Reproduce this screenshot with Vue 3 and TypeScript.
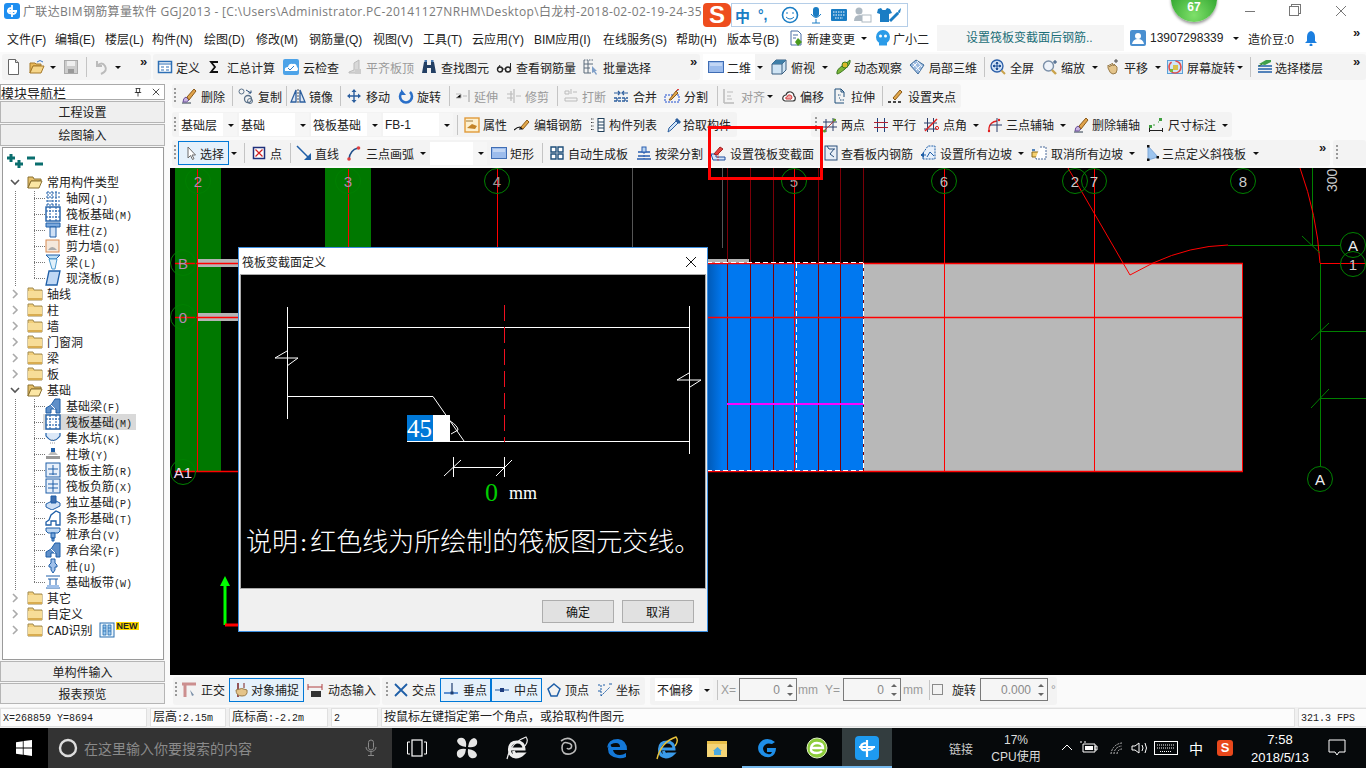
<template>
  <div class="app">
    <div class="title">
      <svg class="title-logo" viewBox="0 0 16 16" v-html="icons.app"></svg>
      <span class="title-text">广联达BIM钢筋算量软件 GGJ2013 - [C:\Users\Administrator.PC-20141127NRHM\Desktop\白龙村-2018-02-02-19-24-35</span>
      <div class="win-btns">
        <span class="win-min"></span>
        <span class="win-max"></span>
        <svg class="win-close" viewBox="0 0 10 10"><path d="M0 0l10 10M10 0L0 10" stroke="#777" fill="none" /></svg>
      </div>
    </div>

    <div v-for="bar in bars" :key="bar.cls" class="bar" :class="bar.cls">
      <div v-for="(g, gi) in bar.groups" :key="gi" class="group" :class="{ plain: g.plain }" :style="{ marginLeft: g.ml + 'px', width: g.w + 'px' }">
        <span class="lead" :style="{ width: g.lead + 'px' }"></span>
        <template v-for="(it, ii) in g.items" :key="ii">
          <div v-if="it.kind === 'tool'" class="tool" :class="{ off: it.off, active: it.active, white: it.white }" :style="{ width: it.w + 'px' }">
            <svg v-if="it.i" class="ic" viewBox="0 0 16 16" :style="{ marginLeft: it.iml + 'px' }" v-html="icons[it.i]"></svg>
            <span class="lbl" :style="{ marginLeft: it.lml + 'px' }">{{ it.l }}</span>
          </div>
          <span v-else-if="it.kind === 'dd'" class="dd" :style="{ width: it.w + 'px' }"></span>
          <span v-else-if="it.kind === 'sep'" class="sep" :style="{ width: it.w + 'px' }"></span>
          <span v-else-if="it.kind === 'grip'" class="grip" :style="{ width: it.w + 'px' }"></span>
          <span v-else-if="it.kind === 'more'" class="more" :style="{ width: it.w + 'px' }">»</span>
          <span v-else-if="it.kind === 'gap'" :style="{ width: it.w + 'px' }"></span>
          <div v-else-if="it.kind === 'combo'" class="combo" :style="{ width: it.bw + 'px', marginRight: it.w - it.bw + 'px' }">
            <span>{{ it.l }}</span><span class="dd combo-dd"></span>
          </div>
          <div v-else-if="it.kind === 'note'" class="note" :style="{ width: it.bw + 'px', marginRight: it.w - it.bw + 'px' }">{{ it.l }}</div>
          <div v-else-if="it.kind === 'spin'" class="spin" :style="{ width: it.bw + 'px', marginRight: it.w - it.bw + 'px' }">
            <span class="spin-val">{{ it.l }}</span>
            <span class="spin-arrows"><i class="up"></i><i class="down"></i></span>
          </div>
          <span v-else-if="it.kind === 'check'" class="check-wrap" :style="{ width: it.w + 'px' }"><span class="check"></span></span>
        </template>
      </div>
    </div>

    <aside class="nav">
      <div class="nav-head">
        <span>模块导航栏</span>
        <span class="nav-head-btns">
          <svg viewBox="0 0 10 12" width="8" height="11"><path d="M2 1h6M3 1v5h4V1M1 6h8M5 6v5" stroke="#222" fill="none" /></svg>
          <svg viewBox="0 0 10 10" width="8" height="8"><path d="M1 1l8 8M9 1l-8 8" stroke="#222" fill="none" /></svg>
        </span>
      </div>
      <div class="nav-btn">工程设置</div>
      <div class="nav-btn">绘图输入</div>
      <div class="tree">
        <div class="tree-tools">
          <svg viewBox="0 0 18 16" width="18" height="16"><path d="M1 5h8M5 1v8M9 11h8M13 7v8" stroke="#0a6e6e" stroke-width="3" fill="none" /></svg>
          <svg viewBox="0 0 18 16" width="18" height="16"><path d="M1 5h8M9 11h8" stroke="#0a6e6e" stroke-width="3" fill="none" /></svg>
        </div>
        <div v-for="(n, idx) in tree" :key="idx" class="row" :class="[n.child ? 'child' : 'parent', { sel: n.sel, last: n.last }]">
          <template v-if="n.child">
            <svg class="ic tree-ic" viewBox="0 0 16 16" v-html="icons[n.i!]"></svg>
            <span class="tree-txt">{{ n.l }}<em>{{ n.k }}</em></span>
          </template>
          <template v-else>
            <svg class="chev" viewBox="0 0 10 10"><path :d="n.open ? 'M1 3l4 4 4-4' : 'M3 1l4 4-4 4'" :stroke="n.open ? '#555' : '#aaa'" stroke-width="1.6" fill="none" /></svg>
            <svg class="ic folder" viewBox="0 0 16 16" v-html="n.open ? icons.fopen : icons.fclosed"></svg>
            <span class="tree-txt">{{ n.l }}</span>
            <template v-if="n.cad">
              <svg class="ic cad" viewBox="0 0 16 16" v-html="icons.cad"></svg>
              <span class="new">NEW</span>
            </template>
          </template>
        </div>
      </div>
      <div class="nav-btn foot">单构件输入</div>
      <div class="nav-btn foot">报表预览</div>
    </aside>

    <main class="canvas">
      <svg class="cad-view" viewBox="170 168 1196 507" width="1196" height="507">
        <defs>
          <linearGradient id="blueFade" x1="0" x2="1" y1="0" y2="0">
            <stop offset="0" stop-color="#0058b4" />
            <stop offset="0.1" stop-color="#0078f0" />
          </linearGradient>
        </defs>
        <g shape-rendering="crispEdges">
          <rect x="175" y="168" width="46" height="304" fill="#007800" />
          <rect x="325" y="168" width="46" height="304" fill="#007800" />
          <rect x="198" y="259" width="540" height="8" fill="#b4b4b4" />
          <rect x="198" y="313" width="540" height="8" fill="#b4b4b4" />
          <rect x="707" y="259" width="42" height="4" fill="#b4b4b4" />
          <rect x="707" y="263" width="156" height="209" fill="url(#blueFade)" />
          <rect x="863" y="263" width="380" height="209" fill="#b8b8b8" />
          <path d="M632.5 168V248M722.500 168V248" stroke="#555" />
          <path v-for="x in darkLines" :key="x" :d="`M${x}.5 168V472`" stroke="#7a0008" />
          <path v-for="x in redLines" :key="x" :d="`M${x}.5 168V472`" stroke="#f00" />
          <path d="M1242.500 263V472" stroke="#f00" />
          <path d="M1228 245.500H1340M1312.500 168V245M1320.500 263V466M1320 331.500H1366M1320 398.500H1366" stroke="#008000" fill="none" />
          <path d="M1320 263.500H1366" stroke="#f00" />
        </g>
        <path d="M175 263.500H1243M175 317.500H1243M175 471.500H1243" stroke="#f00" stroke-width="1.400" />
        <path d="M727 404H864" stroke="#f0f" stroke-width="2" />
        <path d="M707 262.500H863M707 470.500H863M796.500 263V470M863.500 263V470" stroke="#fff" stroke-dasharray="5 3" shape-rendering="crispEdges" />
        <path d="M1068 168L1130 275L1153 263Q1190 246 1228 245" stroke="#f00" fill="none" />
        <path d="M1300 168Q1317 215 1320 263" stroke="#f00" fill="none" />
        <path d="M1302 236L1320 253M1311 340L1329 323M1311 408L1329 389" stroke="#008000" fill="none" />
        <g v-for="a in axes" :key="a.id">
          <circle :cx="a.x" :cy="a.y" r="12.5" fill="none" stroke="#008000" />
          <text :x="a.x" :y="a.y + 6" text-anchor="middle" class="axis-txt" :fill="a.c">{{ a.t }}</text>
        </g>
        <text class="axis-num" transform="translate(1337 192) rotate(-90)">300</text>
        <path d="M225 625V585" stroke="#0f0" stroke-width="3" />
        <path d="M220 586L225 576L230 586Z" fill="#0f0" />
        <path d="M225 625H238" stroke="#f00" stroke-width="3" />
      </svg>
    </main>

    <footer class="status">
      <div class="cell"><em>X=268859 Y=8694</em></div>
      <div class="cell">层高<em>:2.15m</em></div>
      <div class="cell">底标高<em>:-2.2m</em></div>
      <div class="cell"><em>2</em></div>
      <div class="cell">按鼠标左键指定第一个角点，或拾取构件图元</div>
      <div class="cell"><em>321.3 FPS</em></div>
    </footer>

    <div class="taskbar">
      <div class="tb-start"><svg viewBox="0 0 16 16" width="16" height="16"><path d="M0 2.2l6.8-1v6.4H0zM7.6 1l8.4-1v7.6H7.6zM0 8.4h6.8v6.4L0 13.8zM7.6 8.4H16V16l-8.4-1.2z" fill="#fff" /></svg></div>
      <div class="tb-search">
        <svg viewBox="0 0 20 20" width="20" height="20"><circle cx="10" cy="10" r="8" fill="none" stroke="#ddd" stroke-width="2.4" /></svg>
        <span>在这里输入你要搜索的内容</span>
        <svg class="tb-mic" viewBox="0 0 14 18" width="14" height="18"><rect x="4.5" y="1" width="5" height="10" rx="2.5" fill="none" stroke="#8a8a8a" /><path d="M2 8c0 6 10 6 10 0M7 13v3M4 16.500h6" fill="none" stroke="#8a8a8a" /></svg>
      </div>
      <div v-for="t in taskIcons" :key="t.i" class="tb-slot" :class="t.cls">
        <svg viewBox="0 0 24 24" width="24" height="24" v-html="icons[t.i]"></svg>
      </div>
      <div class="tray">
        <span class="tray-link">链接</span>
        <span class="tray-cpu"><b>17%</b><b>CPU使用</b></span>
        <svg class="tray-ic" viewBox="0 0 100 16" width="100" height="16">
          <path d="M1 10l5-5 5 5" stroke="#fff" fill="none" />
          <path d="M22 4h12v8H22zM34 6h2v4h-2zM20 3v-2M24 3V1" stroke="#fff" fill="none" /><rect x="24" y="6" width="8" height="4" fill="#fff" />
          <path d="M50 14a12 12 0 0 1 11-11M53 14a8 8 0 0 1 8-8M56 14a5 5 0 0 1 5-5" stroke="#bbb" stroke-dasharray="2 1" fill="none" />
          <path d="M71 6h3l4-3v10l-4-3h-3zM81 5q2 3 0 6M84 3q3 5 0 10" stroke="#fff" fill="none" />
        </svg>
        <svg class="tray-kb" viewBox="0 0 24 14" width="24" height="14"><rect x=".5" y=".5" width="23" height="13" fill="none" stroke="#fff" /><path d="M3 4h18M3 7h18M6 10.500h12" stroke="#fff" stroke-dasharray="1 1" /></svg>
        <span class="tray-ime">中</span>
        <span class="tray-s">S</span>
        <span class="tray-clock"><b>7:58</b><b>2018/5/13</b></span>
        <svg class="tray-note" viewBox="0 0 18 18" width="18" height="18"><path d="M1 1h16v12h-6l-2 3-2-3H1z" fill="none" stroke="#fff" /></svg>
      </div>
    </div>

    <div class="ime-bar">
      <span class="ime-s">S</span>
      <div class="ime-box">
        <span class="ime-zh">中</span>
        <span class="ime-punct">°,</span>
        <svg viewBox="0 0 120 18" width="130" height="18">
          <circle cx="9" cy="9" r="7.500" fill="none" stroke="#1a7dc4" stroke-width="1.600" /><path d="M5 11q4 4 8 0M6 6v2M12 6v2" stroke="#1a7dc4" fill="none" />
          <rect x="32" y="1" width="6" height="10" rx="3" fill="#1a7dc4" /><path d="M30 8q5 7 10 0M35 13v4M31 17h8" stroke="#1a7dc4" fill="none" />
          <rect x="50" y="3" width="16" height="12" rx="1" fill="#1a7dc4" /><path d="M52 6h12M52 9h12M54 12h8" stroke="#fff" stroke-dasharray="1.500 1" />
          <circle cx="78" cy="5" r="3.500" fill="#aeb9c2" /><path d="M73 15q0-6 6-6t5 6z" fill="#aeb9c2" /><rect x="81" y="9" width="9" height="7" fill="#fff" stroke="#aeb9c2" />
          <path d="M97 3l3-1 1.500 2 3 0 1.500-2 3 1 2 4-3 1v8h-9V8l-3-1z" fill="#1a7dc4" />
          <path d="M120 2l-3 3 1 3-8 8-2-2 8-8 3 1z" fill="#1a7dc4" />
        </svg>
      </div>
    </div>

    <div class="score">67</div>
    <div class="annotation"></div>

    <section class="dialog">
      <header class="dlg-title">
        <span>筏板变截面定义</span>
        <svg viewBox="0 0 10 10" width="10" height="10"><path d="M0 0l10 10M10 0L0 10" stroke="#111" fill="none" /></svg>
      </header>
      <div class="dlg-panel">
        <svg class="dlg-draw" viewBox="241 275 464 313" width="464" height="313">
          <g shape-rendering="crispEdges">
            <path d="M287.500 307V419M288 327.500H690M689.500 306V454M288 396.500H433M445 441.500H690" stroke="#fff" fill="none" />
            <path d="M504.500 305V442" stroke="#f01020" stroke-dasharray="16 6" />
            <path d="M453 467.500H504M453.500 457V477M504.500 457V477" stroke="#fff" fill="none" />
          </g>
          <path d="M433 396.500L464 441M287 351L275 358H298L287 366M689 373L677 380H701L690 387M444 476L461 460M496 476L512 460M450 421Q458 426 458 430L451 434" stroke="#fff" fill="none" />
        </svg>
        <div class="dlg-input"><span class="dlg-hl">45</span></div>
        <span class="dlg-zero">0</span>
        <span class="dlg-mm">mm</span>
        <p class="dlg-note">说明<span class="colon">:</span>红色线为所绘制的筏板图元交线。</p>
      </div>
      <footer class="dlg-foot">
        <button class="dlg-btn">确定</button>
        <button class="dlg-btn">取消</button>
      </footer>
    </section>
  </div>
</template>

<script setup lang="ts">
type Kind = 'tool' | 'dd' | 'sep' | 'grip' | 'more' | 'gap' | 'combo' | 'note' | 'spin' | 'check'

interface Item {
  kind: Kind
  x: number
  w: number
  bw: number
  l: string
  i: string
  iml: number
  lml: number
  off: boolean
  active: boolean
  white: boolean
}

interface Group {
  ml: number
  w: number
  lead: number
  plain: boolean
  items: Item[]
}

function base(kind: Kind, x: number): Item {
  return { kind, x, w: 0, bw: 0, l: '', i: '', iml: 0, lml: 0, off: false, active: false, white: false }
}

// x = left of the item (or of its highlight box), tx = where the label starts
function T(x: number, i: string, tx: number, l: string, o: { ix?: number; off?: boolean; active?: boolean; white?: boolean } = {}): Item {
  const ix = o.ix ?? x
  return { ...base('tool', x), i, l, iml: ix - x, lml: i ? tx - ix - 16 : tx - x, off: !!o.off, active: !!o.active, white: !!o.white }
}
const L = (x: number, l: string, off = false) => T(x, '', x, l, { off })
const D = (c: number) => base('dd', c - 3)
const S = (x: number) => base('sep', x)
const G = (x: number) => base('grip', x)
const M = (x: number) => base('more', x)
const E = (x: number) => base('gap', x)
const C = (x: number, end: number, l: string): Item => ({ ...base('combo', x), bw: end - x, l })
const N = (x: number, end: number, l: string): Item => ({ ...base('note', x), bw: end - x, l })
const P = (x: number, end: number, l: string): Item => ({ ...base('spin', x), bw: end - x, l })
const K = (x: number) => base('check', x)

function bar(cls: string, origin: number, raw: { x: number; end: number; plain?: boolean; items: Item[] }[]) {
  let prev = origin
  const groups: Group[] = raw.map((g) => {
    g.items.forEach((it, idx) => {
      const next = g.items[idx + 1]
      it.w = (next ? next.x : g.end) - it.x
    })
    const out = { ml: g.x - prev, w: g.end - g.x, lead: g.items[0].x - g.x, plain: !!g.plain, items: g.items }
    prev = g.end
    return out
  })
  return { cls, groups }
}

const bars = [
  bar('bar-menu', 0, [{ x: 0, end: 1366, plain: true, items: [
    L(7, '文件(F)'), L(55, '编辑(E)'), L(105, '楼层(L)'), L(152, '构件(N)'), L(204, '绘图(D)'), L(256, '修改(M)'),
    L(309, '钢筋量(Q)'), L(373, '视图(V)'), L(423, '工具(T)'), L(472, '云应用(Y)'), L(534, 'BIM应用(I)'), L(603, '在线服务(S)'),
    L(676, '帮助(H)'), L(727, '版本号(B)'), T(788, 'change', 807, '新建变更'), D(864), T(875, 'xiao', 893, '广小二'),
    N(937, 1124, '设置筏板变截面后钢筋..'), T(1130, 'user', 1150, '13907298339'), D(1236), L(1248, '造价豆:0'),
    T(1303, 'bell', 1320, ''), M(1353),
  ] }]),
  bar('bar-std', 0, [
    { x: 2, end: 151, items: [T(6, 'new', 24, ''), T(29, 'open', 47, ''), D(53), T(63, 'save', 80, ''), S(86), T(93, 'undo', 110, '', { off: true }), D(118), M(140)] },
    { x: 153, end: 700, items: [
      T(157, 'def', 176, '定义'), T(206, 'sigma', 227, '汇总计算'), T(283, 'cloud', 303, '云检查'), T(347, 'flat', 366, '平齐板顶', { off: true }),
      T(421, 'find', 441, '查找图元'), T(496, 'glass', 516, '查看钢筋量'), T(583, 'batch', 603, '批量选择'), M(690),
    ] },
    { x: 703, end: 1366, items: [
      T(703, 'rect', 727, '二维', { ix: 708, white: true }), E(755), D(760), T(771, 'cube', 791, '俯视'), D(825), T(835, 'orbit', 854, '动态观察'), T(909, 'local', 929, '局部三维'),
      S(984), T(990, 'full', 1010, '全屏'), T(1042, 'zoom', 1061, '缩放'), D(1095), T(1105, 'hand', 1124, '平移'), D(1158), T(1167, 'spin', 1187, '屏幕旋转'), D(1240),
      S(1250), T(1257, 'layer', 1275, '选择楼层'), M(1353),
    ] },
  ]),
  bar('bar-edit', 170, [{ x: 172, end: 961, items: [
    G(174), T(181, 'del', 201, '删除'), S(232), T(238, 'copy', 258, '复制'), S(286), T(290, 'mirror', 309, '镜像'), S(340), T(346, 'move', 366, '移动'),
    T(398, 'rot', 417, '旋转'), S(449), T(455, 'extend', 474, '延伸', { off: true }), T(506, 'trim', 525, '修剪', { off: true }), S(557),
    T(563, 'brk', 582, '打断', { off: true }), T(613, 'merge', 633, '合并'), T(664, 'split', 684, '分割'), S(717), T(721, 'align', 741, '对齐', { off: true }), D(770),
    T(781, 'offset', 800, '偏移'), T(832, 'stretch', 851, '拉伸'), S(882), T(888, 'grips', 908, '设置夹点'),
  ] }]),
  bar('bar-prop', 170, [
    { x: 172, end: 737, items: [
      G(174), C(179, 237, '基础层'), C(239, 309, '基础'), C(311, 381, '筏板基础'), C(383, 453, 'FB-1'), S(457), T(464, 'prop', 483, '属性'),
      T(514, 'edit', 534, '编辑钢筋'), T(590, 'list', 609, '构件列表'), T(666, 'pick', 683, '拾取构件'),
    ] },
    { x: 811, end: 1232, items: [
      G(815), T(822, 'two', 841, '两点'), T(873, 'para', 892, '平行'), T(923, 'ang', 943, '点角'), D(976), T(987, 'arc3', 1006, '三点辅轴'), D(1063),
      T(1073, 'del', 1092, '删除辅轴'), T(1148, 'dim', 1168, '尺寸标注'), D(1225),
    ] },
  ]),
  bar('bar-draw', 170, [
    { x: 172, end: 1330, items: [
      G(174), T(178, 'arrow', 200, '选择', { ix: 183, active: true }), E(229), D(234), S(244), T(251, 'pt', 270, '点'), S(290), T(296, 'line', 315, '直线'),
      T(346, 'arc', 366, '三点画弧'), D(423), C(430, 487, ''), T(491, 'rect', 510, '矩形'), S(542), T(549, 'auto', 568, '自动生成板'), T(636, 'bsplit', 655, '按梁分割'),
      T(710, 'setv', 730, '设置筏板变截面'), T(823, 'view', 841, '查看板内钢筋'), T(920, 'setall', 940, '设置所有边坡'), D(1021), T(1031, 'cancel', 1051, '取消所有边坡'), D(1132),
      T(1144, 'slope', 1162, '三点定义斜筏板'), D(1256), M(1319),
    ] },
    { x: 1333, end: 1366, items: [G(1336)] },
  ]),
  bar('bar-snap', 170, [
    { x: 173, end: 380, items: [G(175), T(181, 'ortho', 201, '正交'), T(229, 'snap', 251, '对象捕捉', { ix: 233, active: true }), E(304), T(307, 'dyn', 328, '动态输入')] },
    { x: 382, end: 645, items: [
      G(386), T(393, 'cross', 412, '交点'), T(440, 'perp', 463, '垂点', { ix: 443, active: true }), T(491, 'mid', 514, '中点', { ix: 494, active: true }), E(542),
      T(546, 'vertex', 565, '顶点'), T(597, 'coord', 616, '坐标'),
    ] },
    { x: 650, end: 1057, items: [
      C(655, 713, '不偏移'), S(717), L(721, 'X=', true), P(739, 797, '0'), L(798, 'mm', true), L(825, 'Y=', true), P(843, 901, '0'), L(903, 'mm', true), S(929),
      K(932), L(952, '旋转'), P(980, 1048, '0.000'), L(1051, '°', true),
    ] },
  ]),
]

const tree = [
  { l: '常用构件类型', open: true },
  { l: '轴网', k: '(J)', i: 'grid', child: true },
  { l: '筏板基础', k: '(M)', i: 'raft', child: true },
  { l: '框柱', k: '(Z)', i: 'col', child: true },
  { l: '剪力墙', k: '(Q)', i: 'wall', child: true },
  { l: '梁', k: '(L)', i: 'beam', child: true },
  { l: '现浇板', k: '(B)', i: 'slab', child: true, last: true },
  { l: '轴线' }, { l: '柱' }, { l: '墙' }, { l: '门窗洞' }, { l: '梁' }, { l: '板' },
  { l: '基础', open: true },
  { l: '基础梁', k: '(F)', i: 'fbeam', child: true },
  { l: '筏板基础', k: '(M)', i: 'raft', child: true, sel: true },
  { l: '集水坑', k: '(K)', i: 'pit', child: true },
  { l: '柱墩', k: '(Y)', i: 'pier', child: true },
  { l: '筏板主筋', k: '(R)', i: 'rmain', child: true },
  { l: '筏板负筋', k: '(X)', i: 'rneg', child: true },
  { l: '独立基础', k: '(P)', i: 'indep', child: true },
  { l: '条形基础', k: '(T)', i: 'strip', child: true },
  { l: '桩承台', k: '(V)', i: 'cap', child: true },
  { l: '承台梁', k: '(F)', i: 'fbeam', child: true },
  { l: '桩', k: '(U)', i: 'pile', child: true },
  { l: '基础板带', k: '(W)', i: 'band', child: true, last: true },
  { l: '其它' }, { l: '自定义' }, { l: 'CAD识别', cad: true },
] as { l: string; k?: string; i?: string; child?: boolean; open?: boolean; sel?: boolean; last?: boolean; cad?: boolean }[]

const darkLines = [727, 750, 773, 818, 840, 863]
const redLines = [197, 348, 497, 794, 944, 1094]

const axes = [
  { id: 'c2', x: 198, y: 181, t: '2', c: '#b48ab4' },
  { id: 'c3', x: 348, y: 181, t: '3', c: '#b48ab4' },
  { id: 'c4', x: 497, y: 181, t: '4', c: '#999' },
  { id: 'c5', x: 794, y: 181, t: '5', c: '#999' },
  { id: 'c6', x: 944, y: 181, t: '6', c: '#bbb' },
  { id: 'c2b', x: 1075, y: 181, t: '2', c: '#ccc' },
  { id: 'c7', x: 1094, y: 181, t: '7', c: '#ccc' },
  { id: 'c8', x: 1243, y: 181, t: '8', c: '#ccc' },
  { id: 'cB', x: 183, y: 263, t: 'B', c: '#b48ab4' },
  { id: 'c0', x: 183, y: 317, t: '0', c: '#b48ab4' },
  { id: 'cA1', x: 183, y: 472, t: 'A1', c: '#f0d8f0' },
  { id: 'cA', x: 1353, y: 245, t: 'A', c: '#eee' },
  { id: 'c1', x: 1353, y: 264, t: '1', c: '#ccc' },
  { id: 'cAb', x: 1320, y: 479, t: 'A', c: '#eee' },
]

const taskIcons = [
  { i: 'tview' }, { i: 'tfan' }, { i: 'tie' }, { i: 'tspiral' }, { i: 'tedge' },
  { i: 'tieblue' }, { i: 'tfolder' }, { i: 'tg', cls: 'run' }, { i: 'tgreen', cls: 'run' }, { i: 'tapp', cls: 'cur' },
]

const B = '#1f5fa8'
const icons: Record<string, string> = {
  app: '<rect width="16" height="16" rx="3" fill="#1e8ef0"/><path d="M8 2v12M3 8h10M8 5q-4 0-4 3t4 2M8 11q4 0 4-3" stroke="#fff" stroke-width="1.800" fill="none"/>',
  change: '<path d="M3 1h7l3 3v11H3z" fill="#fff" stroke="#4a6fa5"/><path d="M5 5h5M5 8h3" stroke="#4a6fa5"/><path d="M10 8l4 4-4 4-3-4z" fill="#4a9a1e"/>',
  xiao: '<circle cx="8" cy="7" r="7" fill="#2a9be8"/><circle cx="5.500" cy="6" r="1.500" fill="#fff"/><circle cx="10.500" cy="6" r="1.500" fill="#fff"/><path d="M4 14h8" stroke="#2a9be8" stroke-width="3"/>',
  user: '<rect x="0" y="0" width="16" height="16" rx="2" fill="#4a8fd0"/><circle cx="8" cy="6" r="3" fill="#fff"/><path d="M2 14q1-5 6-5t6 5z" fill="#fff"/>',
  bell: '<path d="M8 1q4 1 4 6v4l2 2H2l2-2V7q0-5 4-6z" fill="#1b7fe0"/><circle cx="8" cy="15" r="1.500" fill="#1b7fe0"/>',
  new: '<path d="M2.500 .5h7l3 3v12h-10z" fill="#fff" stroke="#666"/><path d="M9.500 .5v3h3" fill="#ddd" stroke="#666"/>',
  open: '<path d="M1 4h5l1 1h5v2H4L1 14z" fill="#e9b95a" stroke="#a77a2a"/><path d="M4 7h11l-3 7H1z" fill="#f6d68a" stroke="#a77a2a"/><path d="M8 3q3-3 6 0" stroke="#3c78c8" fill="none"/>',
  save: '<rect x="1.500" y="1.500" width="13" height="13" fill="#ccc" stroke="#aaa"/><rect x="4" y="2" width="8" height="5" fill="#eee"/><rect x="5" y="10" width="6" height="4" fill="#999"/>',
  undo: '<path d="M4 2v5h5M4 7q5-5 8 0t-4 8" stroke="#bbb" stroke-width="2" fill="none"/>',
  def: '<rect x="1.500" y="2.500" width="13" height="11" fill="#fff" stroke="#2d6fb5" stroke-width="1.500"/><path d="M2 5h12M4 8h3M4 11h3M9 8h3M9 11h3" stroke="#2d6fb5"/>',
  sigma: '<path d="M12 3H5l4 5-4 5h7" fill="none" stroke="#111" stroke-width="1.800"/>',
  cloud: '<rect width="16" height="16" rx="2" fill="#4da3e8"/><path d="M2 12q-1-4 3-4 1-4 5-3 3-1 4 3 2 2 0 4z" fill="#fff"/><path d="M5 9l2 2 4-4" stroke="#2a7fd0" fill="none"/>',
  flat: '<path d="M2 13l5-2v-7l5-3v11l2 2H2z" fill="#d8d8d8" stroke="#bbb"/><rect x="8" y="10" width="6" height="5" fill="#ccc"/>',
  find: '<path d="M3 3h3v3h4V3h3l2 11h-5V9H6v5H1z" fill="#233f63"/><rect x="3.500" y="1" width="2.500" height="2" fill="#4a7ab0"/><rect x="10" y="1" width="2.500" height="2" fill="#4a7ab0"/>',
  glass: '<circle cx="4" cy="10.500" r="2.500" fill="none" stroke="#222" stroke-width="1.400"/><circle cx="12" cy="10.500" r="2.500" fill="none" stroke="#222" stroke-width="1.400"/><path d="M6.500 10h3M14.500 10l0-6M1.500 10L4 6" stroke="#222"/>',
  batch: '<path d="M1 1v13h7M1 5h9M1 9h6M5 1v13" stroke="#5a6a7a" fill="none"/><path d="M1 1h10" stroke="#5a6a7a" stroke-dasharray="1.500 1"/><path d="M9 7l5 5-2 0 2 3-1 1-2-3-2 1z" fill="#7f9fc8"/>',
  rect: '<rect x=".5" y="2.500" width="15" height="11" fill="#9cbcec" stroke="#3f6db4"/><rect x="2" y="4" width="12" height="3" fill="#c2d6f4"/>',
  cube: '<path d="M1 5l4-4h10v10l-4 4H1z" fill="#cfe4f4" stroke="#3a5f80"/><path d="M1 5h10v10M11 5l4-4" stroke="#3a5f80" fill="none"/><path d="M1 5l4-4h10l-4 4z" fill="#3f7fa8"/>',
  orbit: '<path d="M2 15q-1-4 5-8t8-6q1 4-5 9t-8 5z" fill="#7bb53a" stroke="#3c7a20"/><circle cx="10" cy="6" r="3" fill="#d9b82a" stroke="#3c7a20"/>',
  local: '<path d="M1 6l6-5 8 5-6 9z" fill="#9dbbe0" stroke="#3f6d9c"/><path d="M4 4l7 8M8 2l5 6M4 8l4-4M7 11l4-4" stroke="#fff"/>',
  full: '<circle cx="7" cy="7" r="6" fill="#cfe0f5" stroke="#2a5ea8" stroke-width="1.300"/><path d="M7 3v8M3 7h8M7 3l-1 1.500h2zM7 11l-1-1.500h2zM3 7l1.500-1v2zM11 7l-1.500-1v2z" stroke="#1f4f96"/><path d="M11.500 11.500l3.500 3.500" stroke="#c9a24a" stroke-width="2"/>',
  zoom: '<circle cx="6.500" cy="7" r="5" fill="#eef3fa" stroke="#7a8fa8" stroke-width="1.400"/><path d="M10 11l4 4" stroke="#c9a24a" stroke-width="2.400"/><path d="M13 1v4M11 3h4" stroke="#2a4f7a"/>',
  hand: '<path d="M3 9V6l2 2V5l2 2V4l2 3V5l3 3v3q0 4-4 4-3 0-5-6z" fill="#e4c48a" stroke="#9a7c4a"/><path d="M11 0v4M9 2h4" stroke="#4a4a4a"/>',
  spin: '<rect x=".5" y="1.500" width="15" height="13" fill="#cfe6f8" stroke="#5aa0d8"/><circle cx="8" cy="8" r="6" fill="none" stroke="#e05050" stroke-width="1.600" stroke-dasharray="24 4"/><rect x="6" y="6" width="5" height="5" fill="#d9c24a"/><rect x="3" y="10" width="3" height="3" fill="#7bb53a"/>',
  layer: '<path d="M2 5l7-4h5v2L8 6z" fill="#3fa04a"/><path d="M1 7h14M1 10h14M1 13h14" stroke="#1f5fa8" stroke-width="1.600"/><path d="M2 7l3-2" stroke="#2c6e2c"/>',
  del: '<path d="M1 15h9" stroke="#2a3a4a"/><path d="M2 14q0-4 3-5l3 3q-2 3-6 2z" fill="#c8b4e0" stroke="#6a4f9a"/><path d="M6 9l7-8 2 2-7 9z" fill="#e0a24a" stroke="#8a5a1a"/>',
  copy: '<circle cx="3.500" cy="3.500" r="2.500" fill="none" stroke="#5a7088"/><circle cx="10" cy="11" r="3.500" fill="none" stroke="#5a7088" stroke-width="1.300"/><circle cx="12" cy="13" r="2.500" fill="none" stroke="#5a7088"/><path d="M8 2l5 3M13 5V2.500M13 5h-2.500" stroke="#2a4f7a" fill="none"/>',
  mirror: '<path d="M8 1v14" stroke="#555" stroke-dasharray="2 1"/><path d="M6 2v12H1zM10 2v12h5z" fill="#e0e8f4" stroke="#2d5f9e" stroke-width="1.300"/>',
  move: '<path d="M8 2v12M2 8h12" stroke="#2d5f9e" stroke-width="1.400"/><path d="M8 1L5.500 4h5zM8 15l-2.500-3h5zM1 8l3-2.500v5zM15 8l-3-2.500v5z" fill="#2d5f9e"/>',
  rot: '<path d="M4 4a6 6 0 1 0 8 0" stroke="#2a6fc8" stroke-width="2.600" fill="none"/><path d="M3 1v6h5z" fill="#2a6fc8"/>',
  extend: '<path d="M14 2v12" stroke="#bbb" stroke-width="1.500"/><path d="M1 6h5M1 10h5v-4M8 8h4" stroke="#bbb"/>',
  trim: '<path d="M8 1v14M5 3v10" stroke="#bbb" stroke-width="1.200"/><path d="M1 6h6M1 10h6M10 8h5" stroke="#bbb"/>',
  brk: '<path d="M2 3h4v3H2zM2 10h12v3H2z" stroke="#bbb" fill="none"/><path d="M10 4h4M8 1v5" stroke="#bbb"/>',
  merge: '<path d="M1 5h5M15 5h-5M5 3l2 2-2 2M11 3L9 5l2 2" stroke="#2d5f9e" fill="none" stroke-width="1.200"/><path d="M1 10h14M1 13h14M4 10v3M12 10v3" stroke="#2d5f9e" stroke-width="1.300" stroke-dasharray="3 1"/>',
  split: '<rect x="1" y="7" width="14" height="7" fill="none" stroke="#1f4fd0" stroke-dasharray="2 1"/><path d="M5 12l7-9 2 2-7 7z" fill="#e2a84a" stroke="#8a5a1a"/><path d="M12 3l2-2 1 1" stroke="#d44"/>',
  align: '<path d="M3 1v14M3 15h10" stroke="#bbb" stroke-width="1.500"/><path d="M6 4h6M6 8h4M6 11h5" stroke="#bbb"/>',
  offset: '<path d="M4 13q-3-1-2-4 1-2 3-2 1-4 5-3 3 1 3 4 2 1 1 4-1 1-2 1z" fill="#fff" stroke="#3a3a3a" stroke-width="1.200"/><path d="M5 11q-1-2 1-2 1-3 3-2 2 0 2 3-1 2-2 1z" fill="#f2a8a8" stroke="#d04040"/>',
  stretch: '<path d="M3 1h6l3 3v5M3 1v14h9" stroke="#1f4f7a" fill="none"/><path d="M9 1v3h3" stroke="#1f4f7a" fill="none"/><path d="M6 7h3M7 10h1M8 12h5" stroke="#1f4f7a" stroke-dasharray="1.500 1"/>',
  grips: '<path d="M5 10l7-8 2 2-7 8z" fill="#e2a84a" stroke="#8a5a1a"/><path d="M0 14h3M5 14h3M10 14h3" stroke="#111" stroke-width="1.500"/>',
  prop: '<rect x="1" y="1" width="14" height="14" fill="#fdf0cf" stroke="#e09a3a" stroke-width="1.400"/><path d="M2 4h7" stroke="#a07a3a"/><path d="M3 11l5-4 5 2-2 3z" fill="#c48428"/>',
  edit: '<path d="M0 13q3-3 6-3l2 2H5" stroke="#111" stroke-width="1.200" fill="none"/><path d="M7 10l6-7 2 2-6 7z" fill="#e2a84a" stroke="#8a5a1a"/>',
  list: '<path d="M1 2h3M1 5.500h3M1 9h3M1 12.500h3" stroke="#333" stroke-dasharray="1.500 1"/><rect x="8" y="1.500" width="6" height="13" fill="#fff" stroke="#1f3f5a"/><path d="M8 5h6M8 8h6M8 11h6" stroke="#1f3f5a"/>',
  pick: '<path d="M2 15l1-4 7-7 2 2-7 7z" fill="#cfe4fa" stroke="#2d5f9e"/><path d="M9 3l2-2 4 4-2 2z" fill="#2d5f9e"/>',
  two: '<path d="M4 2v13M11 1v13M1 5h14M1 10h14" stroke="#2d3f6a" fill="none"/><path d="M2 14L14 2" stroke="#b04040"/><circle cx="2.500" cy="14" r="1.500" fill="#5a9a2a"/><circle cx="12.500" cy="3" r="1.500" fill="#5a9a2a"/>',
  para: '<path d="M4.500 1v14M11.500 1v14" stroke="#1f3f7a"/><path d="M1 5.500h14M1 10.500h14" stroke="#b02030"/>',
  ang: '<path d="M4.500 1v14M10.500 1v14M1 6h13M1 12h13" stroke="#2d3f6a"/><path d="M2 14L14 2" stroke="#e02020" stroke-width="1.400"/><circle cx="14" cy="11" r="1.600" fill="none" stroke="#e02020"/>',
  arc3: '<path d="M2 15V11Q3 5 10 4" stroke="#e02020" stroke-width="1.300" fill="none"/><path d="M10 1v14M3 8h12" stroke="#2d3f6a"/><circle cx="2" cy="14" r="1.200" fill="#e02020"/><circle cx="12" cy="3" r="1.200" fill="#e02020"/>',
  dim: '<path d="M1.500 11v4M14.500 11v4M1 13.500h14" stroke="#222"/><rect x="11" y="1" width="3" height="3" fill="#3fa03f"/><rect x="1" y="8" width="3" height="3" fill="#3fa03f"/><path d="M5 8h2M10 5h1" stroke="#3fa03f"/>',
  arrow: '<path d="M5 2v11l2.500-2.500 2 4 1.500-.8-2-3.700h3.500z" fill="#fff" stroke="#6a6a6a"/>',
  pt: '<rect x="2.500" y="2.500" width="11" height="11" fill="#fff" stroke="#1f2f7a" stroke-width="1.500"/><path d="M4.500 4.500l7 7M11.500 4.500l-7 7" stroke="#d02020" stroke-width="1.200"/>',
  line: '<path d="M1 1l12 12" stroke="#1f5fa8" stroke-width="1.500"/><path d="M15 8v7H8z" fill="#1f5fa8"/>',
  arc: '<path d="M3 14Q4 5 12 3" stroke="#1f4f8a" stroke-width="1.500" fill="none"/><circle cx="3" cy="14" r="1.800" fill="#e04040"/><circle cx="12.500" cy="3" r="1.800" fill="#e04040"/>',
  auto: '<path d="M2 2h5v5H2zM9 2h5v5H9zM2 9h5v5H2zM9 9h5v5H9z" fill="#fff" stroke="#1f4f7a" stroke-width="1.400"/>',
  bsplit: '<path d="M2 7h12M2 11h12M1 14h14" stroke="#2a5fb0" stroke-width="1.400"/><rect x="6" y="2" width="4" height="5" fill="#bcd6f2" stroke="#2a5fb0"/><path d="M8 7v7" stroke="#2a5fb0" stroke-dasharray="2 1"/>',
  setv: '<path d="M1 9h5v3h9v3H3z" fill="#d5e4f8" stroke="#1f4fa0"/><path d="M4 9l6-7 3 2-6 6z" fill="#e84040" stroke="#a02020"/><path d="M8 9v7" stroke="#d02020" stroke-dasharray="1.500 1"/>',
  view: '<rect x="2" y="1" width="12" height="14" fill="#e8eef6" stroke="#2a4f7a"/><path d="M4 1l2 3h6M11 4L7 9l4 3" stroke="#2a4f7a" fill="none"/>',
  setall: '<path d="M3 14V8l5-7h7v13z" fill="#e8f0fa" stroke="#1f5fa8" stroke-dasharray="2 1"/><path d="M7 12l3-5 4 4" stroke="#1f5fa8" fill="none"/><path d="M1 10h5M1 10l2.500-2v4z" stroke="#1f5fa8" fill="#1f5fa8"/>',
  cancel: '<path d="M1 7h10v5H1z" fill="#f5d070" stroke="#8a6a1a"/><path d="M9 2h6v12H5v-2" fill="#fff" stroke="#4a6a9a" stroke-dasharray="2 1"/><path d="M1 5h3" stroke="#1f5fa8" stroke-width="1.500"/>',
  slope: '<path d="M4 1v14l10-3z" fill="#9cc4ee" stroke="#7fa8d8"/><rect x="3" y="0" width="2.500" height="2.500" fill="#111"/><rect x="3" y="13.500" width="2.500" height="2.500" fill="#111"/><rect x="12.500" y="11" width="2.500" height="2.500" fill="#111"/>',
  ortho: '<path d="M1 2h14M4 2v13" stroke="#cc8f8f" stroke-width="3"/><path d="M9 8l4 5-2 1z" fill="#7a8fa8"/>',
  snap: '<path d="M5 1v14" stroke="#7a2020" stroke-width="1.500"/><path d="M11 1v5" stroke="#7a2020"/><path d="M3 8q6-3 11 0 1 6-5 6-6 0-6-6z" fill="#e4c48a" stroke="#9a7c4a"/>',
  dyn: '<path d="M1 2v6M15 2v6M1 5h14" stroke="#b04040"/><rect x="4" y="9" width="10" height="6" fill="#333"/>',
  cross: '<path d="M2 2l12 12M14 2L2 14" stroke="#1f5fa8" stroke-width="1.800"/>',
  perp: '<path d="M1 11h14" stroke="#3a78c8" stroke-width="1.600"/><path d="M9 1v10" stroke="#1f3f70" stroke-width="1.200"/><rect x="7.500" y="9.500" width="3" height="3" fill="#1f3f70"/>',
  mid: '<path d="M1 8h14" stroke="#6a90c0" stroke-width="1.600"/><rect x="6" y="6" width="4" height="4" fill="#1f3f80"/>',
  vertex: '<path d="M8 2l6 5-3 7H5L2 7z" fill="none" stroke="#1f5fa8" stroke-width="1.500"/>',
  coord: '<path d="M4 3v11M4 14l9-9" stroke="#1f5fa8" stroke-dasharray="2 1" fill="none"/><path d="M1 3h2M6 3h2M12 2h3M1 9h3" stroke="#1f5fa8"/>',
  fopen: '<path d="M1 3h5l1 2h7v2H4l-3 7z" fill="#e6c06a" stroke="#8a7030"/><path d="M4 7h11l-3 7H1z" fill="#fbe6a4" stroke="#8a7030"/>',
  fclosed: '<path d="M1 2h5l1 2h8v10H1z" fill="#f2cf7a" stroke="#a08a50"/><path d="M1 5h14v9H1z" fill="#f7dd98"/><path d="M1 12h14v2H1z" fill="#d8ac50"/>',
  grid: `<path d="M1 3h14M1 7h14M1 11h14M1 15h14M3 1v14M7 1v14M11 1v14" stroke="${B}" stroke-dasharray="2 1"/>`,
  raft: `<rect x="1" y="1" width="14" height="14" fill="#fff" stroke="${B}" stroke-width="1.400"/><path d="M5 1v14M11 1v14M1 5h14M1 11h14" stroke="${B}" stroke-dasharray="2 1"/>`,
  col: `<path d="M1 1h14v4H1z" fill="#7aa8dc" stroke="${B}"/><path d="M5 5h6v10H5z" fill="#cfe0f5" stroke="${B}"/>`,
  wall: '<rect x="1" y="2" width="13" height="12" fill="#f4e8dc" stroke="#d88a50"/><path d="M3 12q4-6 9 0z" fill="#aaa"/>',
  beam: `<path d="M1 1h14L11 5H5z" fill="#bfe0f5" stroke="${B}"/><path d="M4 5h8l-2 10H7z" fill="#e0f0fa" stroke="#4a9ad0"/>`,
  slab: `<path d="M4 1h11l-3 14H1z" fill="#bfd8f5" stroke="${B}" stroke-width="1.300"/>`,
  fbeam: `<path d="M1 15V10l5-3 4-6h5v14h-4v-4H6v4z" fill="#5f8fc8" stroke="${B}"/><path d="M6 7l4 4" stroke="#fff"/>`,
  pit: `<path d="M1 3v3q7 9 14 0V3" fill="#dbe8f8" stroke="${B}" stroke-width="1.200"/><path d="M5 10h6M5 13h6" stroke="#999" stroke-dasharray="1 1"/>`,
  pier: `<rect x="6" y="2" width="4" height="4" fill="${B}"/><path d="M3 9l3-3h4l3 3z" fill="#bbb"/><rect x="1" y="10" width="14" height="3" fill="#999"/>`,
  rmain: `<rect x="1" y="1" width="14" height="14" fill="#e8f0fa" stroke="${B}"/><path d="M8 3v10M3 7h10M4 12h8" stroke="${B}"/>`,
  rneg: `<rect x="1" y="1" width="14" height="14" fill="#e8f0fa" stroke="${B}"/><path d="M8 2v12M3 6h10M3 10h10" stroke="${B}"/>`,
  indep: `<path d="M1 10l8-4 6 3v3l-8 4-6-3z" fill="#cfe0f5" stroke="${B}"/><path d="M6 2h5v7H6z" fill="#3f6fae" stroke="${B}"/>`,
  strip: `<path d="M1 15v-3l3-2 2-5 5-4 4 2v12h-4v-4H6v4z" fill="#fff" stroke="${B}" stroke-width="1.300"/>`,
  cap: `<path d="M1 2h14v3l-2 2H3L1 5z" fill="#bcd6f2" stroke="${B}"/><path d="M6 7h4v5H6zM7 12h2v3H7z" fill="#7aa8dc" stroke="${B}"/>`,
  pile: `<path d="M6 1h4v4l2 2v2h-2v3l-2 3-2-3V9H4V7l2-2z" fill="#9fc0ea" stroke="${B}"/>`,
  band: `<path d="M1 2h14M3 5h10M1 14h14M5 5v9M11 5v9" stroke="${B}"/><path d="M2 11h12v3H2z" fill="#9fc0ea"/>`,
  cad: '<rect x="1" y="1" width="14" height="14" fill="#e8f4fc" stroke="#2a6fb0"/><path d="M4 3h3v10H4zM9 3h3v10H9zM4 6h3M4 9h3M9 6h3M9 9h3" fill="#9ccaf0" stroke="#2a6fb0" stroke-width=".8"/>',
  tview: '<rect x="7" y="4" width="10" height="16" fill="none" stroke="#fff" stroke-width="1.200"/><path d="M5 6H2.500v12H5M19 6h2.500v12H19" stroke="#fff" fill="none"/>',
  tfan: '<path d="M11 11Q3 10 2 5 3 1 8 2q4 2 3 9zM13 11q1-8 6-9 4 1 3 6-2 4-9 3zM13 13q8 1 9 6-1 4-6 3-4-2-3-9zM11 13q-1 8-6 9-4-1-3-6 2-4 9-3z" fill="#e6e6e6"/>',
  tie: '<path d="M5 13h14q0-7-7-7-7 0-7.500 7t6.500 8q4 0 7-3h-5q-4 1-4.500-3" fill="none" stroke="#eee" stroke-width="3"/><path d="M2 23Q6 6 21 1q3 4-1 9" fill="none" stroke="#eee" stroke-width="1.200"/>',
  tspiral: '<path d="M6 5q8-6 14 2 3 9-5 11-8 1-8-6t6-5q5 1 3 5-3 2-4 0" fill="none" stroke="#bbb" stroke-width="1.600"/>',
  tedge: '<path d="M2 12Q3 3 13 3q9 1 9 11H8q1 5 7 5 3 0 6-2v4q-4 2-8 1-10-1-10-9 0-4 3-6-1 3 1 4h8q0-4-4-4-5 0-9 5z" fill="#1478d8"/>',
  tieblue: '<path d="M5 13h14q0-7-7-7-7 0-7.500 7t6.500 8q4 0 7-3h-5q-4 1-4.500-3" fill="none" stroke="#3a9ae8" stroke-width="3"/><path d="M2 23Q6 6 21 1q3 4-1 9" fill="none" stroke="#e8c23a" stroke-width="1.400"/>',
  tfolder: '<path d="M2 5h8l2 2h10v14H2z" fill="#f4d476"/><rect x="2" y="5" width="20" height="3" fill="#e8bf4a"/><rect x="9" y="14" width="7" height="5" fill="#4aa8e0"/><path d="M8 15l4.500-4 4.500 4z" fill="#4aa8e0"/>',
  tg: '<path d="M20 6Q14 1 8 4 1 9 4 16q4 6 11 5 6-2 6-9h-9v4h5q-1 3-4 2-5-1-5-6 2-6 9-4l3-2z" fill="#1e8ee8"/>',
  tgreen: '<circle cx="12" cy="12" r="10" fill="#8ccc3a"/><circle cx="12" cy="12" r="10" fill="none" stroke="#dff0c4"/><path d="M6 12h12q0-5-6-5-5 0-6 5t6 5q3 0 5-2" fill="none" stroke="#fff" stroke-width="2.400"/>',
  tapp: '<rect x="0" y="0" width="24" height="24" rx="4" fill="#1e9af0"/><path d="M12 4v17M4 11h16M12 7q-6 0-6 4t6 3M12 14q6 0 6-3" fill="none" stroke="#fff" stroke-width="2.200"/>',
}
</script>

<style>
html, body {
  margin: 0;
  background: #000;
  overflow: hidden;
}
</style>

<style scoped>
.app {
  position: relative;
  width: 1366px;
  height: 768px;
  overflow: hidden;
  background: #fafafa;
  font-family: "Liberation Sans", "Noto Sans CJK SC", sans-serif;
  font-size: 12px;
  color: #222;
  display: grid;
  grid-template-columns: 170px 1196px;
  grid-template-rows: 24px 28px 32px 26px 29px 29px 507px 32px 21px 40px;
  grid-template-areas:
    "title title"
    "menu menu"
    "std std"
    "nav edit"
    "nav prop"
    "nav draw"
    "nav canvas"
    "nav snap"
    "status status"
    "task task";
}
.title {
  grid-area: title;
  display: flex;
  align-items: center;
  background: #fff;
  color: #7a7a7a;
  position: relative;
  white-space: nowrap;
}
.title-logo {
  width: 16px;
  height: 16px;
  margin: 0 3px 2px 4px;
}
.title-text {
  margin-bottom: 2px;
  font-family: "Open Sans", "Noto Sans CJK SC", sans-serif;
  letter-spacing: .34px;
}
.win-btns {
  position: absolute;
  top: 0;
  right: 0;
}
.win-min {
  position: absolute;
  right: 111px;
  top: 11px;
  width: 10px;
  height: 1px;
  background: #777;
}
.win-max {
  position: absolute;
  right: 67px;
  top: 6px;
  width: 8px;
  height: 8px;
  border: 1px solid #777;
  box-shadow: 2px -2px 0 -1px #fff, 2px -2px 0 0 #777;
}
.win-close {
  position: absolute;
  right: 20px;
  top: 6px;
  width: 10px;
  height: 10px;
}

.bar {
  display: flex;
  align-items: flex-start;
  white-space: nowrap;
}
.bar-menu {
  grid-area: menu;
  background: #fff;
}
.bar-std {
  grid-area: std;
}
.bar-edit {
  grid-area: edit;
}
.bar-prop {
  grid-area: prop;
}
.bar-draw {
  grid-area: draw;
}
.bar-snap {
  grid-area: snap;
}
.group {
  display: flex;
  align-items: center;
  background: #f3f3f3;
  border-radius: 3px;
  height: 26px;
  flex: none;
}
.group.plain {
  background: transparent;
  height: 28px;
}
.bar-std .group {
  margin-top: 2px;
}
.bar-edit .group {
  height: 24px;
}
.bar-prop .group {
  margin-top: 2px;
  height: 25px;
}
.bar-draw .group {
  margin-top: 1px;
}
.bar-snap .group {
  margin-top: 2px;
  height: 28px;
  padding-bottom: 3px;
  box-sizing: border-box;
}
.lead {
  flex: none;
}
.tool {
  flex: none;
  display: flex;
  align-items: center;
  height: 24px;
  box-sizing: border-box;
}
.tool.off {
  color: #9a9a9a;
}
.tool.active {
  background: #e5f1fb;
  outline: 1px solid #0078d7;
  outline-offset: -1px;
}
.tool.white {
  background: #fff;
  height: 26px;
}
.ic {
  width: 16px;
  height: 16px;
  flex: none;
}
.lbl {
  flex: none;
}
.dd {
  flex: none;
  height: 10px;
  position: relative;
}
.dd::after {
  content: "";
  position: absolute;
  left: 0;
  top: 4px;
  border: 3px solid transparent;
  border-top: 3px solid #111;
  border-bottom: 0;
}
.sep {
  flex: none;
  height: 20px;
  position: relative;
}
.sep::after {
  content: "";
  position: absolute;
  left: 0;
  top: 0;
  width: 1px;
  height: 20px;
  background: #c4c4c4;
}
.grip {
  flex: none;
  height: 16px;
  background: radial-gradient(circle at 1px 1px, #999 1px, transparent 1.2px) 0 0 / 3px 4px repeat-y;
}
.more {
  flex: none;
  font-size: 13px;
  font-weight: bold;
  line-height: 10px;
  margin-top: -10px;
}
.combo {
  flex: none;
  display: flex;
  align-items: center;
  justify-content: space-between;
  background: linear-gradient(90deg, #fff calc(100% - 14px), #f6f6f6 calc(100% - 14px));
  height: 23px;
  padding: 0 3px 0 2px;
  box-sizing: border-box;
}
.combo-dd {
  width: 6px;
}
.note {
  flex: none;
  height: 26px;
  line-height: 26px;
  background: #f5f5f5;
  color: #1b6f78;
  padding-left: 29px;
  box-sizing: border-box;
}
.spin {
  flex: none;
  display: flex;
  align-items: center;
  justify-content: flex-end;
  height: 23px;
  box-sizing: border-box;
  border: 1px solid #7a7a7a;
  background: #f6f6f6;
  color: #8a8a8a;
}
.spin-val {
  margin-right: 3px;
}
.spin-arrows {
  width: 13px;
  display: flex;
  flex-direction: column;
  align-items: center;
  gap: 6px;
}
.spin-arrows i {
  display: block;
  border: 3px solid transparent;
}
.spin-arrows .up {
  border-top: 0;
  border-bottom: 3px solid #666;
}
.spin-arrows .down {
  border-bottom: 0;
  border-top: 3px solid #666;
}
.check-wrap {
  flex: none;
}
.check {
  display: block;
  width: 11px;
  height: 11px;
  border: 1px solid #8a8a8a;
  box-sizing: border-box;
}

.nav {
  grid-area: nav;
  width: 165px;
  height: 620px;
  display: flex;
  flex-direction: column;
  gap: 1px;
  background: #f6f6f6;
}
.nav-head {
  display: flex;
  justify-content: space-between;
  align-items: center;
  height: 16px;
  box-sizing: border-box;
  border: 1px solid #aaa;
  padding: 0 4px 0 0;
  font-size: 13px;
  background: #fff;
  overflow: hidden;
}
.nav-head-btns {
  display: flex;
  gap: 10px;
  align-items: center;
}
.nav-btn {
  height: 22px;
  flex: none;
  box-sizing: border-box;
  border: 1px solid #b5b5b5;
  background: #efefef;
  text-align: center;
  line-height: 22px;
  font-size: 12px;
}
.nav-btn.foot {
  height: 21px;
}
.tree {
  flex: 1;
  box-sizing: border-box;
  margin-left: 2px;
  margin-right: 1px;
  border: 1px solid #9a9a9a;
  background: #fff;
  font-family: "Liberation Mono", "Noto Sans CJK SC", monospace;
  overflow: hidden;
}
.tree-tools {
  height: 26px;
  display: flex;
  align-items: center;
  padding-left: 3px;
  gap: 2px;
}
.row {
  position: relative;
  height: 16px;
  display: flex;
  align-items: center;
  white-space: nowrap;
}
.row.parent {
  padding-left: 7px;
}
.chev {
  width: 10px;
  height: 10px;
  flex: none;
}
.folder {
  margin-left: 7px;
}
.tree-txt {
  margin-left: 4px;
}
.tree-txt em {
  font-style: normal;
  font-size: 10px;
}
.row.child {
  padding-left: 42px;
  background:
    repeating-linear-gradient(0deg, #777 0 1px, transparent 1px 2px) 12px 0 / 1px 100% no-repeat,
    repeating-linear-gradient(0deg, #777 0 1px, transparent 1px 2px) 31px 0 / 1px 100% no-repeat,
    repeating-linear-gradient(90deg, #777 0 1px, transparent 1px 2px) 31px 8px / 11px 1px no-repeat;
}
.row.child.last {
  background:
    repeating-linear-gradient(0deg, #777 0 1px, transparent 1px 2px) 12px 0 / 1px 100% no-repeat,
    repeating-linear-gradient(0deg, #777 0 1px, transparent 1px 2px) 31px 0 / 1px 8px no-repeat,
    repeating-linear-gradient(90deg, #777 0 1px, transparent 1px 2px) 31px 8px / 11px 1px no-repeat;
}
.row.child .tree-txt {
  padding-left: 1px;
  margin-left: 4px;
}
.row.sel::before {
  content: "";
  position: absolute;
  left: 40px;
  top: 0;
  width: 93px;
  height: 16px;
  background: #d9d9d9;
}
.row.sel > * {
  position: relative;
}
.cad {
  margin-left: 6px;
}
.new {
  font-family: "Liberation Sans", sans-serif;
  font-size: 9px;
  font-weight: bold;
  background: #ffd800;
  color: #222;
  line-height: 8px;
  margin: -8px 0 0 1px;
  padding: 0 1px;
}

.canvas {
  grid-area: canvas;
  background: #000;
  overflow: hidden;
}
.cad-view {
  display: block;
}
.axis-txt {
  font-family: "Liberation Sans Narrow", "Liberation Sans", sans-serif;
  font-size: 15px;
}
.axis-num {
  font-family: "Liberation Sans", sans-serif;
  font-size: 14px;
  fill: #ccc;
}

.status {
  grid-area: status;
  display: grid;
  grid-template-columns: 147px 76px 99px 47px 914px 69px;
  column-gap: 3px;
  background: #f0f0f0;
  font-size: 12px;
  white-space: nowrap;
}
.cell {
  box-sizing: border-box;
  height: 19px;
  margin-top: 1px;
  border: 1px solid #e0e0e0;
  background: #fcfcfc;
  line-height: 19px;
  padding-left: 2px;
  font-family: "Liberation Mono", "Noto Sans CJK SC", monospace;
  overflow: hidden;
}
.cell em {
  font-style: normal;
  font-size: 10px;
}

.taskbar {
  grid-area: task;
  display: flex;
  align-items: stretch;
  background: #06090b;
  color: #fff;
  position: relative;
}
.tb-start {
  width: 48px;
  flex: none;
  display: flex;
  align-items: center;
  justify-content: center;
  background: #000;
}
.tb-search {
  width: 344px;
  flex: none;
  display: flex;
  align-items: center;
  background: #333;
  color: #8a8a8a;
  font-size: 14px;
  padding-left: 10px;
  box-sizing: border-box;
}
.tb-search span {
  margin-left: 6px;
}
.tb-mic {
  margin-left: 112px;
}
.tb-slot {
  width: 50px;
  flex: none;
  display: flex;
  align-items: center;
  justify-content: center;
  box-sizing: border-box;
}
.tb-slot.run {
  border-bottom: 2px solid #76b9ed;
  padding-top: 2px;
}
.tb-slot.cur {
  background: #333d3f;
  border-bottom: 2px solid #76b9ed;
  padding-top: 2px;
}
.tray {
  flex: 1;
  display: flex;
  align-items: center;
  font-size: 12px;
  white-space: nowrap;
}
.tray-link {
  margin-left: 57px;
  color: #ccc;
}
.tray-cpu {
  margin-left: 19px;
  margin-top: 2px;
  width: 48px;
  display: flex;
  flex-direction: column;
  align-items: center;
  line-height: 17px;
  color: #ddd;
}
.tray-cpu b,
.tray-clock b {
  font-weight: normal;
}
.tray-ic {
  margin-left: 21px;
  flex: none;
}
.tray-kb {
  margin-left: -7px;
  flex: none;
}
.tray-ime {
  margin-left: 11px;
  font-size: 14px;
}
.tray-s {
  margin-left: 14px;
  width: 16px;
  height: 16px;
  background: #e8481c;
  border-radius: 3px;
  font-weight: bold;
  font-size: 13px;
  line-height: 16px;
  text-align: center;
}
.tray-clock {
  margin-left: 17px;
  margin-top: 2px;
  width: 60px;
  display: flex;
  flex-direction: column;
  align-items: center;
  line-height: 18px;
  font-size: 13px;
}
.tray-note {
  margin-left: 18px;
  flex: none;
}

.ime-bar {
  position: absolute;
  left: 703px;
  top: 3px;
  display: flex;
  height: 24px;
}
.ime-s {
  width: 28px;
  background: #ee4d1e;
  color: #fff;
  font-size: 24px;
  font-weight: bold;
  line-height: 24px;
  text-align: center;
  border-radius: 4px 6px 6px 4px;
}
.ime-box {
  width: 177px;
  box-sizing: border-box;
  border: 1px solid #b5cee8;
  background: #fff;
  display: flex;
  align-items: center;
  color: #1a7dc4;
  font-weight: bold;
}
.ime-zh {
  font-size: 15px;
  margin-left: 3px;
}
.ime-punct {
  font-size: 14px;
  margin-left: 8px;
}
.ime-box svg {
  margin-left: 8px;
}
.score {
  position: absolute;
  left: 1171px;
  top: -24px;
  width: 46px;
  height: 46px;
  border-radius: 50%;
  background: radial-gradient(circle at 50% 85%, #7fe06a, #2aa02a 70%);
  box-shadow: 0 2px 3px rgba(0, 0, 0, .4);
  color: #fff;
  font-weight: bold;
  text-align: center;
  line-height: 14px;
  padding-top: 24px;
  box-sizing: border-box;
}
.annotation {
  position: absolute;
  left: 708px;
  top: 126px;
  width: 115px;
  height: 54px;
  box-sizing: border-box;
  border: 3px solid #f00;
}

.dialog {
  position: absolute;
  left: 238px;
  top: 247px;
  width: 470px;
  height: 385px;
  box-sizing: border-box;
  border: 1px solid #3d8fe0;
  background: #f0f0f0;
  display: flex;
  flex-direction: column;
}
.dlg-title {
  height: 27px;
  flex: none;
  background: #fff;
  display: flex;
  align-items: center;
  justify-content: space-between;
  padding: 0 11px 0 3px;
}
.dlg-panel {
  position: relative;
  height: 313px;
  margin: 0 2px;
  outline: 1px solid #aaa;
  background: #000;
  flex: none;
  overflow: hidden;
}
.dlg-draw {
  display: block;
}
.dlg-input {
  position: absolute;
  left: 166px;
  top: 140px;
  width: 43px;
  height: 27px;
  background: #fff;
  font-family: "Liberation Serif", serif;
  font-size: 25px;
  line-height: 27px;
  color: #fff;
}
.dlg-hl {
  display: block;
  width: 26px;
  height: 26px;
  background: #0078d7;
}
.dlg-zero {
  position: absolute;
  left: 244px;
  top: 203px;
  font-family: "Liberation Serif", serif;
  font-size: 26px;
  color: #0c0;
}
.dlg-mm {
  position: absolute;
  left: 268px;
  top: 208px;
  font-family: "Liberation Serif", serif;
  font-size: 18px;
  color: #fff;
}
.dlg-note {
  position: absolute;
  left: 5px;
  top: 249px;
  margin: 0;
  white-space: nowrap;
  font-family: "Liberation Serif", "Noto Sans CJK SC", serif;
  font-size: 26px;
  font-weight: 300;
  line-height: 38px;
  color: #fff;
}
.colon {
  margin: 0 3px 0 2px;
}
.dlg-foot {
  flex: 1;
  display: flex;
  justify-content: flex-end;
  align-items: center;
  gap: 8px;
  padding: 4px 13px 0 0;
}
.dlg-btn {
  width: 72px;
  height: 23px;
  padding: 0;
  border: 1px solid #adadad;
  background: #e1e1e1;
  font: inherit;
  color: #111;
}
</style>
